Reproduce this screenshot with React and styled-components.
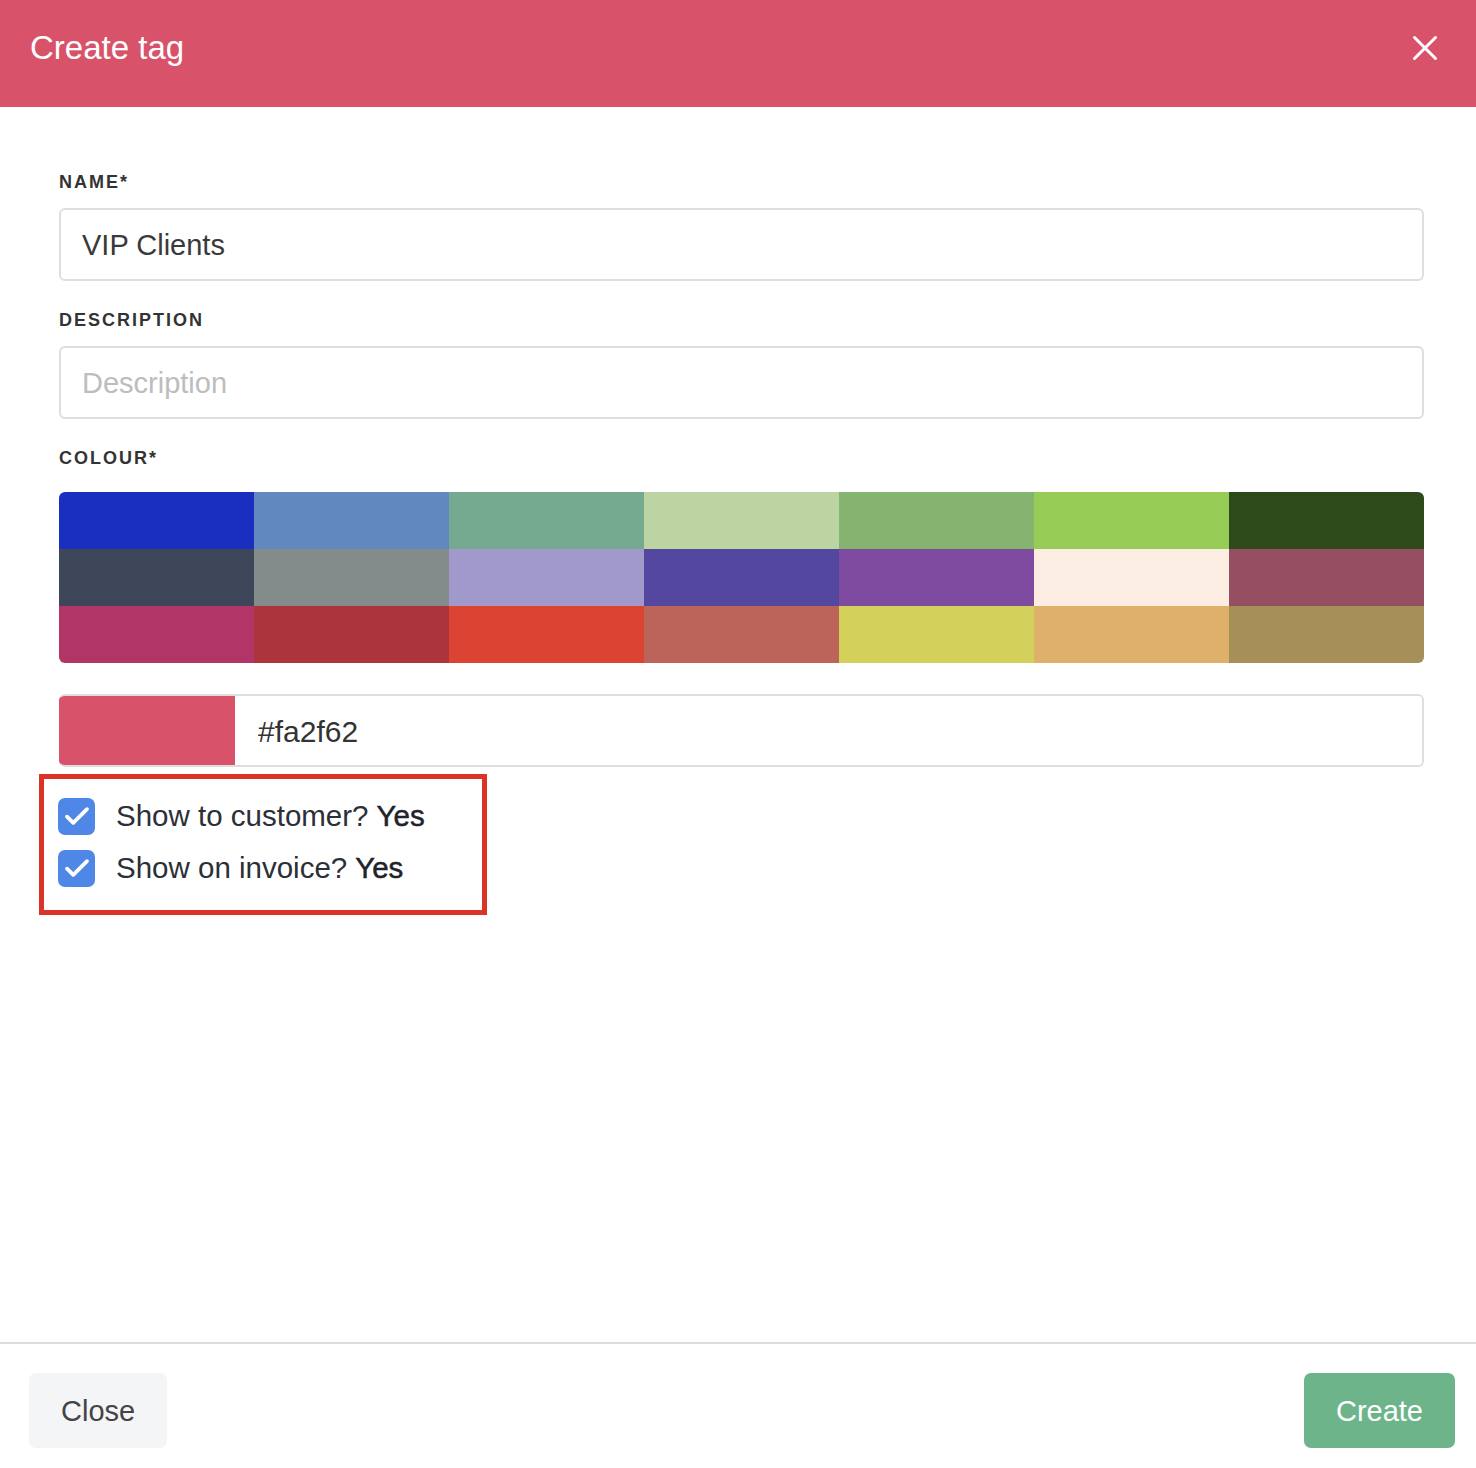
import * as React from 'react';
import styled, {createGlobalStyle} from "styled-components";

const GlobalStyle = createGlobalStyle`
  html, body {
    margin: 0;
    padding: 0;
    background: #fff;
  }
  * {
    box-sizing: border-box;
  }
`

const palette = [
    ["#1a2fbf", "#6189bf", "#75aa91", "#bbd4a1", "#84b46f", "#97cc56", "#2c4a1a"],
    ["#3d4759", "#848b8b", "#a198cc", "#5447a0", "#7e4ba1", "#fbede2", "#964f60"],
    ["#b13667", "#ab343d", "#db4432", "#bd645a", "#d3d15b", "#dfb06a", "#a68f58"],
]

const Modal = styled.div`
  width: 1476px;
  min-height: 1468px;
  display: flex;
  flex-direction: column;
  font-family: "Liberation Sans", Arial, sans-serif;
  color: #333;
`

const Header = styled.div`
  height: 107px;
  background-color: #d8536a;
  display: flex;
  align-items: center;
  justify-content: space-between;
  padding: 0 38px 11px 30px;
`

const Title = styled.h1`
  margin: 0;
  font-size: 33px;
  font-weight: normal;
  color: #fff;
`

const CloseIcon = styled.button`
  border: none;
  background: none;
  padding: 0;
  width: 26px;
  height: 26px;
  cursor: pointer;
  display: flex;
`

const Body = styled.div`
  flex: 1;
  padding: 64px 52px 0 59px;
`

const Field = styled.div`
  margin-bottom: 28px;
`

const Label = styled.label`
  display: block;
  font-size: 18px;
  line-height: 22px;
  font-weight: bold;
  letter-spacing: 2px;
  text-transform: uppercase;
  color: #333;
  margin-bottom: ${props => props.gap || 15}px;
`

const TextInput = styled.input`
  display: block;
  width: 100%;
  height: 73px;
  border: 2px solid #dedede;
  border-radius: 6px;
  padding: 2px 21px 0;
  font-family: inherit;
  font-size: 29px;
  color: #3a3a3a;
  outline: none;
  &::placeholder {
    color: #bdbdbd;
  }
`

const Palette = styled.div`
  display: grid;
  grid-template-columns: repeat(7, 1fr);
  grid-auto-rows: 57px;
  border-radius: 6px;
  overflow: hidden;
`

const Swatch = styled.div`
  background-color: ${props => props.colour};
  cursor: pointer;
`

const HexRow = styled.div`
  display: flex;
  height: 73px;
  margin-top: 31px;
  border: 2px solid #dedede;
  border-left: none;
  border-radius: 6px;
  overflow: hidden;
`

const HexSwatch = styled.div`
  width: 176px;
  background-color: ${props => props.colour};
  margin-top: -2px;
  margin-bottom: -2px;
`

const HexInput = styled.input`
  flex: 1;
  border: none;
  outline: none;
  padding: 2px 23px 0;
  font-family: inherit;
  font-size: 30px;
  color: #333;
`

const Highlight = styled.div`
  width: 448px;
  margin: 7px 0 0 -20px;
  border: 5px solid #dc3328;
  padding: 11px 0 16px 14px;
`

const CheckRow = styled.label`
  display: flex;
  align-items: center;
  height: 52px;
  font-size: 29.5px;
  color: #2b2f37;
  cursor: pointer;

  .check-box {
    width: 37px;
    height: 37px;
    border-radius: 7px;
    background-color: #4f87e7;
    display: flex;
    align-items: center;
    justify-content: center;
    margin-right: 21px;
    flex-shrink: 0;
  }

  .check-answer {
    color: #1f232b;
    margin-left: 8px;
    -webkit-text-stroke: 0.5px #1f232b;
  }
`

const Footer = styled.div`
  border-top: 2px solid #dcdcdc;
  padding: 29px 21px 20px 29px;
  display: flex;
  justify-content: space-between;
`

const Button = styled.button`
  height: 75px;
  padding: 2px 32px 0;
  border: none;
  border-radius: 7px;
  font-family: inherit;
  font-size: 29px;
  cursor: pointer;
  background-color: ${props => props.primary ? "#6db48b" : "#f4f5f7"};
  color: ${props => props.primary ? "#fff" : "#444"};
`

const CheckMark = () => (
    <svg width="30" height="30" viewBox="0 0 24 24" fill="none">
        <path d="M4 12.5l5 5L20 6.5" stroke="#fff" strokeWidth="3" strokeLinecap="round" strokeLinejoin="round"/>
    </svg>
)

const Check = ({question}) => (
    <CheckRow>
        <span className="check-box"><CheckMark/></span>
        <span>{question}</span>
        <span className="check-answer">Yes</span>
    </CheckRow>
)

const App = () => {
    const [colour] = React.useState("#d8536a")

    return (
        <Modal>
            <GlobalStyle/>
            <Header>
                <Title>Create tag</Title>
                <CloseIcon aria-label="Close">
                    <svg width="26" height="26" viewBox="0 0 26 26">
                        <path d="M2.5 2.5L23.5 23.5M23.5 2.5L2.5 23.5" stroke="#fff" strokeWidth="3" strokeLinecap="round"/>
                    </svg>
                </CloseIcon>
            </Header>

            <Body>
                <Field>
                    <Label>Name*</Label>
                    <TextInput defaultValue="VIP Clients"/>
                </Field>
                <Field>
                    <Label>Description</Label>
                    <TextInput placeholder="Description"/>
                </Field>
                <div>
                    <Label gap={23}>Colour*</Label>
                    <Palette>
                        {palette.flat().map((c, index) => (
                            <Swatch colour={c} key={index}/>
                        ))}
                    </Palette>
                    <HexRow>
                        <HexSwatch colour={colour}/>
                        <HexInput defaultValue="#fa2f62"/>
                    </HexRow>
                </div>

                <Highlight>
                    <Check question="Show to customer?"/>
                    <Check question="Show on invoice?"/>
                </Highlight>
            </Body>

            <Footer>
                <Button>Close</Button>
                <Button primary>Create</Button>
            </Footer>
        </Modal>
    )
}

export default App
